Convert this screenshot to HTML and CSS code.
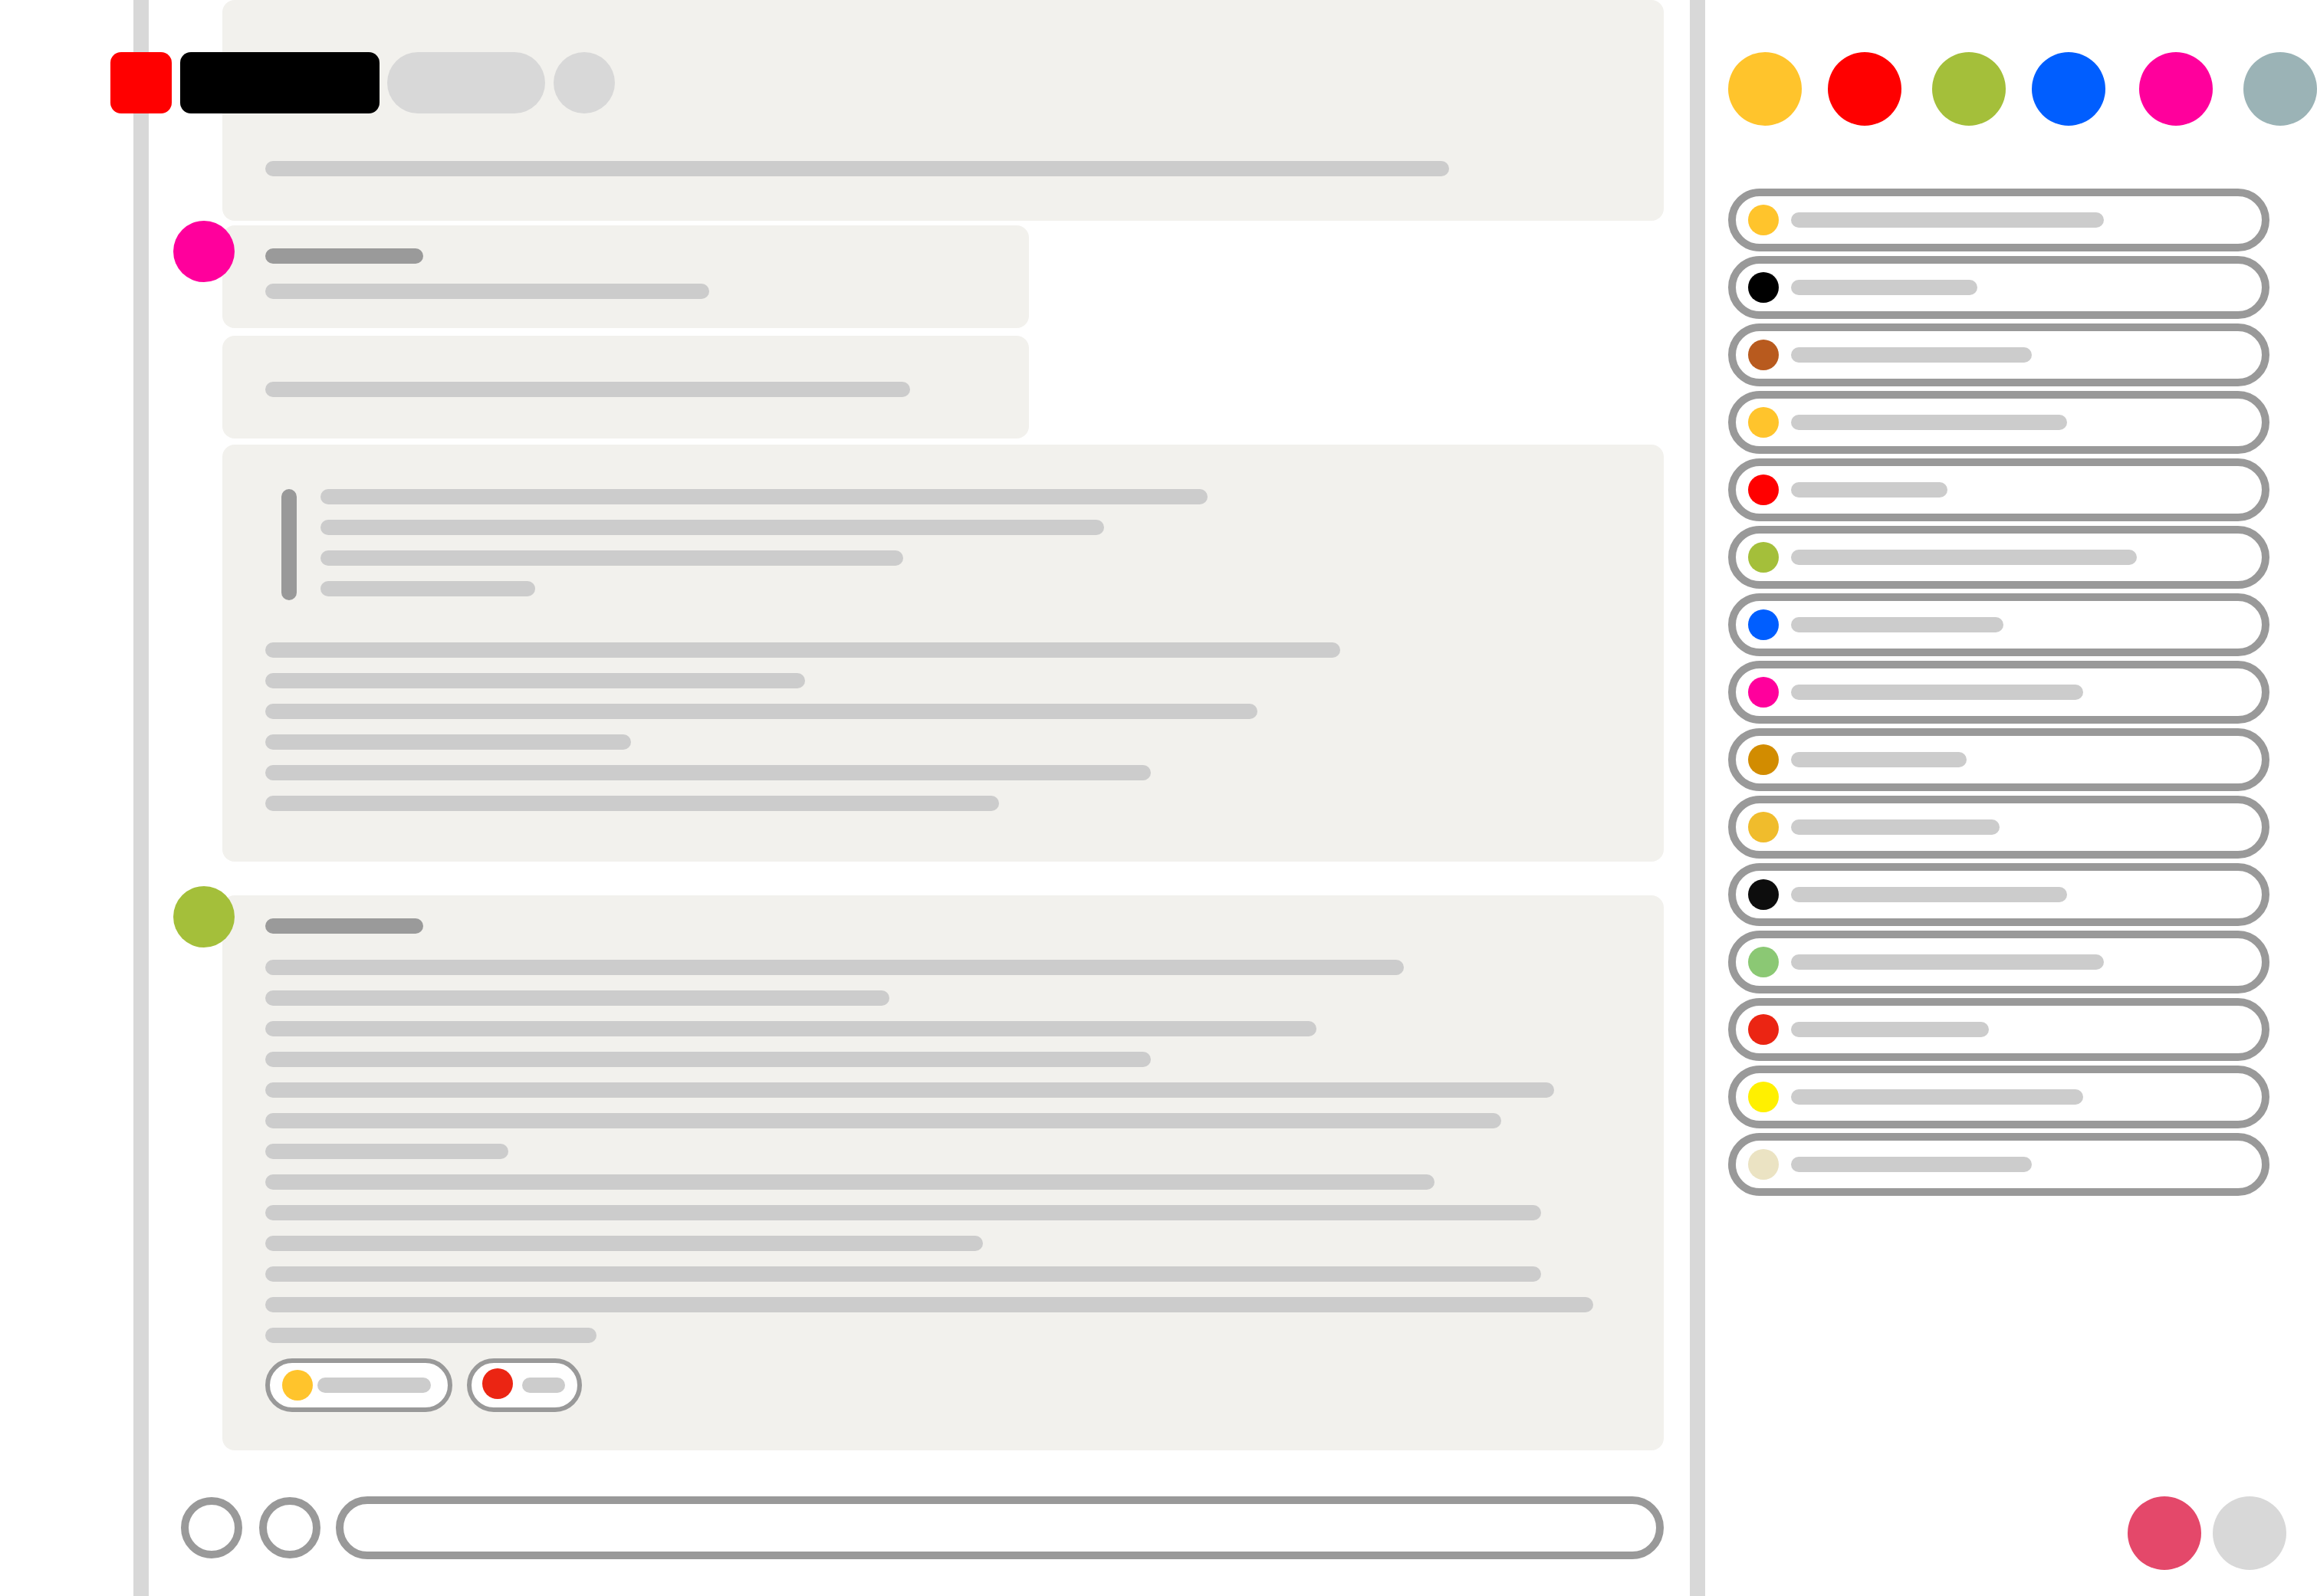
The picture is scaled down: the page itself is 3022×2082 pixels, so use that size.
FILE: index.html
```html
<!DOCTYPE html>
<html lang="en">
<head>
<meta charset="utf-8">
<title>Chat wireframe</title>
<link rel="stylesheet" href="styles.css">
</head>
<body>
<div class="app">
  <div class="gutter"></div>
  <div class="rail"></div>
  <main class="main">
    <div class="toolbar">
      <span class="tb-red"></span>
      <span class="tb-black"></span>
      <span class="tb-pill"></span>
      <span class="tb-circle"></span>
    </div>

    <section class="card card-top">
      <span class="bar" style="width:1544px"></span>
    </section>

    <div class="group group-1">
      <span class="avatar avatar-pink"></span>
      <div class="card card-msg card-2">
        <span class="bar bar-dark" style="width:206px"></span>
        <span class="bar" style="width:579px"></span>
      </div>
      <div class="card card-msg card-3">
        <span class="bar" style="width:841px"></span>
      </div>
      <div class="card card-4">
        <div class="quote">
          <span class="quote-bar"></span>
          <div class="lines">
            <span class="bar" style="width:1157px"></span>
            <span class="bar" style="width:1022px"></span>
            <span class="bar" style="width:760px"></span>
            <span class="bar" style="width:280px"></span>
          </div>
        </div>
        <div class="lines para">
          <span class="bar" style="width:1402px"></span>
          <span class="bar" style="width:704px"></span>
          <span class="bar" style="width:1294px"></span>
          <span class="bar" style="width:477px"></span>
          <span class="bar" style="width:1155px"></span>
          <span class="bar" style="width:957px"></span>
        </div>
      </div>
    </div>

    <div class="group group-2">
      <span class="avatar avatar-green"></span>
      <div class="card card-5">
        <span class="bar bar-dark" style="width:206px"></span>
        <div class="lines para5">
          <span class="bar" style="width:1485px"></span>
          <span class="bar" style="width:814px"></span>
          <span class="bar" style="width:1371px"></span>
          <span class="bar" style="width:1155px"></span>
          <span class="bar" style="width:1681px"></span>
          <span class="bar" style="width:1612px"></span>
          <span class="bar" style="width:317px"></span>
          <span class="bar" style="width:1525px"></span>
          <span class="bar" style="width:1664px"></span>
          <span class="bar" style="width:936px"></span>
          <span class="bar" style="width:1664px"></span>
          <span class="bar" style="width:1732px"></span>
          <span class="bar" style="width:432px"></span>
        </div>
        <div class="chips">
          <span class="chip chip-a"><span class="dot" style="background:#ffc42c"></span><span class="bar" style="width:148px"></span></span>
          <span class="chip chip-b"><span class="dot" style="background:#eb2513"></span><span class="bar" style="width:56px"></span></span>
        </div>
      </div>
    </div>

    <div class="composer">
      <span class="ring"></span>
      <span class="ring"></span>
      <span class="input"></span>
    </div>
  </main>
  <div class="rail"></div>
  <aside class="sidebar">
    <div class="swatches">
      <span class="swatch" style="background:#ffc42c"></span>
      <span class="swatch sw-2" style="background:#ff0000"></span>
      <span class="swatch sw-3" style="background:#a4bf3a"></span>
      <span class="swatch sw-4" style="background:#005eff"></span>
      <span class="swatch sw-5" style="background:#ff009c"></span>
      <span class="swatch sw-6" style="background:#9bb3b6"></span>
    </div>
    <ul class="list">
      <li class="item"><span class="dot" style="background:#ffc42c"></span><span class="bar" style="width:408px"></span></li>
      <li class="item"><span class="dot" style="background:#000000"></span><span class="bar" style="width:243px"></span></li>
      <li class="item"><span class="dot" style="background:#b85a1e"></span><span class="bar" style="width:314px"></span></li>
      <li class="item"><span class="dot" style="background:#ffc42c"></span><span class="bar" style="width:360px"></span></li>
      <li class="item"><span class="dot" style="background:#ff0000"></span><span class="bar" style="width:204px"></span></li>
      <li class="item"><span class="dot" style="background:#a4bf3a"></span><span class="bar" style="width:451px"></span></li>
      <li class="item"><span class="dot" style="background:#005eff"></span><span class="bar" style="width:277px"></span></li>
      <li class="item"><span class="dot" style="background:#ff009c"></span><span class="bar" style="width:381px"></span></li>
      <li class="item"><span class="dot" style="background:#d28c00"></span><span class="bar" style="width:229px"></span></li>
      <li class="item"><span class="dot" style="background:#f0bc2c"></span><span class="bar" style="width:272px"></span></li>
      <li class="item"><span class="dot" style="background:#0d0d0d"></span><span class="bar" style="width:360px"></span></li>
      <li class="item"><span class="dot" style="background:#8bc874"></span><span class="bar" style="width:408px"></span></li>
      <li class="item"><span class="dot" style="background:#eb2513"></span><span class="bar" style="width:258px"></span></li>
      <li class="item"><span class="dot" style="background:#fff000"></span><span class="bar" style="width:381px"></span></li>
      <li class="item"><span class="dot" style="background:#ebe3c3"></span><span class="bar" style="width:314px"></span></li>
    </ul>
    <div class="corner">
      <span class="corner-dot corner-red"></span>
      <span class="corner-dot corner-gray"></span>
    </div>
  </aside>
</div>
</body>
</html>
```

FILE: styles.css
```css
* { box-sizing: border-box; }

html, body {
  margin: 0;
  padding: 0;
  background: #ffffff;
  font-family: "Liberation Sans", Arial, sans-serif;
}

body {
  width: 3022px;
  height: 2082px;
  overflow: hidden;
}

.app {
  display: flex;
  height: 2082px;
}

.gutter { width: 174px; flex: none; }

.rail {
  width: 20px;
  flex: none;
  background: #d8d8d8;
}

.main {
  position: relative;
  width: 2010px;
  flex: none;
  padding: 0 34px 0 96px;
  display: flex;
  flex-direction: column;
}

/* toolbar floats over the rail and the top card */
.toolbar {
  position: absolute;
  top: 68px;
  left: -50px;
  display: flex;
  gap: 11px;
  z-index: 2;
}
.toolbar span { display: block; height: 80px; }
.tb-red { width: 80px; background: #ff0000; border-radius: 14px; }
.tb-black { width: 260px; background: #000000; border-radius: 14px; margin-right: -1px; }
.tb-pill { width: 206px; background: #d8d8d8; border-radius: 40px; }
.tb-circle { width: 80px; background: #d8d8d8; border-radius: 50%; }

.card {
  background: #f2f1ed;
  border-radius: 16px;
}

.bar {
  display: block;
  height: 20px;
  border-radius: 10px;
  background: #cccccc;
  flex: none;
}
.bar-dark { background: #9a9a9a; }

.card-top {
  height: 288px;
  padding: 210px 56px 58px;
}

.group { position: relative; }
.group-1 { margin-top: 6px; }
.group-2 { margin-top: 44px; }

.avatar {
  position: absolute;
  left: -64px;
  width: 80px;
  height: 80px;
  border-radius: 50%;
  z-index: 1;
}
.avatar-pink { top: -6px; background: #ff009c; }
.avatar-green { top: -12px; background: #a4bf3a; }

.card-msg { width: 1052px; }

.card-2 {
  padding: 30px 56px 38px;
  display: flex;
  flex-direction: column;
  gap: 26px;
}

.card-3 {
  margin-top: 10px;
  padding: 60px 56px 54px;
}

.card-4 {
  margin-top: 8px;
  padding: 58px 56px 66px;
}

.quote {
  display: flex;
  gap: 31px;
  margin-left: 21px;
}
.quote-bar {
  width: 20px;
  height: 145px;
  border-radius: 10px;
  background: #999999;
  flex: none;
}

.lines {
  display: flex;
  flex-direction: column;
  gap: 20px;
}
.para { margin-top: 55px; }

.card-5 {
  padding: 30px 56px 50px;
}
.para5 { margin-top: 34px; }

.chips {
  display: flex;
  gap: 19px;
  margin-top: 20px;
}
.chip {
  display: flex;
  align-items: center;
  height: 70px;
  background: #ffffff;
  border: 6px solid #999999;
  border-radius: 35px;
}
.chip-a { width: 244px; gap: 6px; padding-left: 16px; }
.chip-b { width: 150px; gap: 12px; padding-left: 14px; }
.chip-b .dot { margin-top: -4px; }

.dot {
  display: block;
  width: 40px;
  height: 40px;
  border-radius: 50%;
  flex: none;
}

.composer {
  display: flex;
  align-items: center;
  margin-top: 60px;
  margin-left: -54px;
}
.ring {
  display: block;
  width: 80px;
  height: 80px;
  border: 10px solid #999999;
  border-radius: 50%;
  background: #ffffff;
  margin-right: 22px;
  flex: none;
}
.ring + .ring { margin-right: 20px; }
.input {
  display: block;
  flex: 1;
  height: 82px;
  border: 10px solid #999999;
  border-radius: 41px;
  background: #ffffff;
}

.sidebar {
  flex: 1;
  display: flex;
  flex-direction: column;
  padding: 68px 0 0 30px;
}

.swatches {
  display: flex;
}
.swatch {
  display: block;
  width: 96px;
  height: 96px;
  border-radius: 50%;
  flex: none;
}
.sw-2 { margin-left: 34px; }
.sw-3 { margin-left: 40px; }
.sw-4 { margin-left: 34px; }
.sw-5 { margin-left: 44px; }
.sw-6 { margin-left: 40px; }

.list {
  list-style: none;
  margin: 82px 0 0;
  padding: 0;
  display: flex;
  flex-direction: column;
  gap: 6px;
}
.item {
  width: 706px;
  height: 82px;
  border: 10px solid #999999;
  border-radius: 41px;
  background: #ffffff;
  display: flex;
  align-items: center;
  gap: 16px;
  padding-left: 16px;
}

.corner {
  margin-top: auto;
  display: flex;
  justify-content: flex-end;
  gap: 15px;
  padding: 0 40px 34px 0;
}
.corner-dot {
  display: block;
  width: 96px;
  height: 96px;
  border-radius: 50%;
}
.corner-red { background: #e4486a; }
.corner-gray { background: #d8d8d8; }
```
